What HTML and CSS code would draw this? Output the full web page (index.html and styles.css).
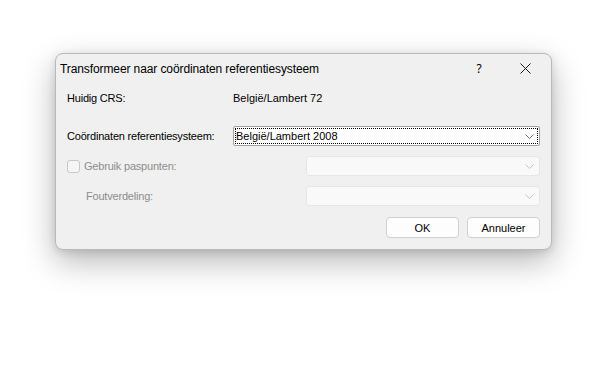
FILE: index.html
```html
<!DOCTYPE html>
<html>
<head>
<meta charset="utf-8">
<link rel="stylesheet" href="styles.css">
</head>
<body>
<div class="window">
  <div class="titlebar">
    <span class="title">Transformeer naar coördinaten referentiesysteem</span>
    <span class="tb-btn help">?</span>
    <span class="tb-btn close"><svg width="11" height="11" viewBox="0 0 11 11"><path d="M0.5 0.5 L10.5 10.5 M10.5 0.5 L0.5 10.5" stroke="#1a1a1a" stroke-width="1" fill="none"/></svg></span>
  </div>
  <div class="content">
    <div class="row r1">
      <span class="label w1">Huidig CRS:</span>
      <span class="value">België/Lambert 72</span>
    </div>
    <div class="row r2">
      <span class="label w1">Coördinaten referentiesysteem:</span>
      <div class="combo active">
        <div class="focus">België/Lambert 2008</div>
        <svg class="chev" width="9" height="5" viewBox="0 0 9 5"><path d="M0.5 0.5 L4.5 4.5 L8.5 0.5" stroke="#6d6d6d" fill="none"/></svg>
      </div>
    </div>
    <div class="row r3">
      <span class="label w2 disabled"><span class="check"></span>Gebruik paspunten:</span>
      <div class="combo dis">
        <svg class="chev" width="9" height="5" viewBox="0 0 9 5"><path d="M0.5 0.5 L4.5 4.5 L8.5 0.5" stroke="#c4c4c4" fill="none"/></svg>
      </div>
    </div>
    <div class="row r4">
      <span class="label w2 disabled indent">Foutverdeling:</span>
      <div class="combo dis">
        <svg class="chev" width="9" height="5" viewBox="0 0 9 5"><path d="M0.5 0.5 L4.5 4.5 L8.5 0.5" stroke="#c4c4c4" fill="none"/></svg>
      </div>
    </div>
    <div class="buttons">
      <button class="btn">OK</button>
      <button class="btn">Annuleer</button>
    </div>
  </div>
</div>
</body>
</html>
```
FILE: styles.css
```css
html {
  margin: 0;
  padding: 0;
  background: #ffffff;
  height: 100%;
}
body {
  margin: 0;
  min-height: 100%;
  box-sizing: border-box;
  padding: 53px 0 0 55px;
  font-family: "Liberation Sans", Arial, sans-serif;
  font-size: 11px;
  color: #000;
}
.window {
  width: 495px;
  height: 195px;
  background: #f0f0f0;
  border: 1px solid #b9b9b9;
  border-radius: 8px;
  box-shadow: 0 12px 32px rgba(0,0,0,0.28), 0 2px 8px rgba(0,0,0,0.12);
  display: flex;
  flex-direction: column;
}
.titlebar {
  height: 29px;
  display: flex;
  align-items: center;
  padding-left: 4px;
}
.title {
  flex: 1;
  font-family: "Liberation Sans", Arial, sans-serif;
  font-size: 12px;
  letter-spacing: -0.1px;
  color: #000;
}
.tb-btn {
  width: 46px;
  display: flex;
  justify-content: center;
  align-items: center;
}
.help {
  font-family: "Noto Sans", sans-serif;
  font-size: 12px;
}
.close {
  margin-right: 3px;
}
.content {
  padding: 0 11px 0 11px;
  display: flex;
  flex-direction: column;
}
.row {
  display: flex;
  align-items: center;
}
.r1 { height: 20px; margin-top: 5px; }
.r2 { height: 20px; margin-top: 18px; }
.r3 { height: 20px; margin-top: 10px; }
.r4 { height: 20px; margin-top: 10px; }
.label {
  flex: none;
  display: flex;
  align-items: center;
  white-space: nowrap;
  letter-spacing: -0.2px;
}
.w1 { width: 166px; }
.w2 { width: 239px; }
.disabled { color: #8d8d8d; }
.indent { padding-left: 19px; box-sizing: border-box; }
.check {
  width: 11px;
  height: 11px;
  border: 1px solid #c8c8c8;
  border-radius: 3px;
  background: #f6f6f6;
  margin-right: 4px;
}
.value { color: #000; }
.combo {
  flex: 1;
  height: 100%;
  box-sizing: border-box;
  position: relative;
  display: flex;
  align-items: center;
}
.combo.active {
  background: #fff;
  border: 1px solid #a0a0a0;
  border-radius: 2px;
  padding: 1px;
}
.focus {
  flex: 1;
  height: 100%;
  box-sizing: border-box;
  outline: 1px dotted #000;
  outline-offset: -1px;
  display: flex;
  align-items: center;
  padding-left: 1px;
}
.combo.dis {
  background: #f9f9f9;
  border: 1px solid #e6e6e6;
  border-radius: 3px;
}
.chev {
  position: absolute;
  right: 5px;
  top: 50%;
  margin-top: -2px;
}
.buttons {
  display: flex;
  justify-content: flex-end;
  gap: 8px;
  margin-top: 11px;
}
.btn {
  width: 73px;
  height: 21px;
  background: #fdfdfd;
  border: 1px solid #d0d0d0;
  border-radius: 4px;
  font-family: "Liberation Sans", Arial, sans-serif;
  font-size: 11px;
  color: #000;
  padding: 0;
}
```
